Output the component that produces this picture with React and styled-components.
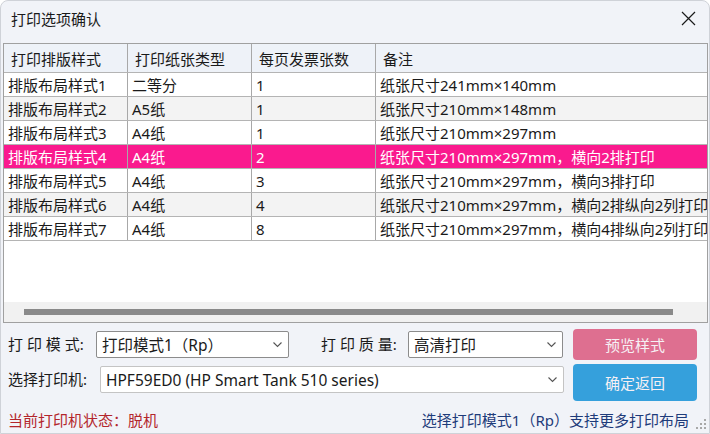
import React from "react";
import styled, { createGlobalStyle } from "styled-components";

const GlobalStyle = createGlobalStyle`
  html, body {
    margin: 0;
    padding: 0;
    background: #ffffff;
  }
  * {
    box-sizing: border-box;
  }
`;

const font = `"Noto Sans", "Noto Sans CJK SC", sans-serif`;

const Window = styled.div`
  width: 710px;
  height: 434px;
  display: flex;
  flex-direction: column;
  background: #f1f3f8;
  border: 1px solid #cfd2d8;
  border-radius: 8px 8px 0 0;
  overflow: hidden;
  font-family: ${font};
  color: #1a1a1a;
`;

const TitleBar = styled.div`
  height: 34px;
  margin-bottom: 8px;
  flex-shrink: 0;
  display: flex;
  align-items: center;
  justify-content: space-between;
  padding: 0 13px 0 10px;
  font-size: 15px;
`;

const CloseButton = styled.button`
  width: 16px;
  height: 16px;
  padding: 0;
  border: none;
  background: transparent;
  display: flex;
  align-items: center;
  justify-content: center;
  cursor: pointer;
`;

const Grid = styled.div`
  height: 280px;
  margin: 0 1px 0 2px;
  display: flex;
  flex-direction: column;
  border: 1px solid #a0a0a0;
  background: #ffffff;
  overflow: hidden;
`;

const Row = styled.div`
  display: grid;
  grid-template-columns: 124px 124px 124px 1fr;
  height: ${(p) => (p.$header ? "29px" : "24px")};
  flex-shrink: 0;
  background: ${(p) =>
    p.$header ? "#eef2f8" : p.$selected ? "#fa1a8e" : p.$alt ? "#f3f3f3" : "#ffffff"};
  color: ${(p) => (p.$selected ? "#ffffff" : "#1a1a1a")};
  border-bottom: 1px solid #b4b4b4;
`;

const Cell = styled.div`
  display: flex;
  align-items: center;
  padding-left: ${(p) => (p.$header ? "7px" : "4px")};
  border-right: 1px solid #a8a8a8;
  font-size: 15px;
  white-space: nowrap;
  overflow: hidden;
  &:last-child {
    border-right: none;
  }
`;

const Filler = styled.div`
  flex: 1;
`;

const ScrollTrack = styled.div`
  height: 20px;
  flex-shrink: 0;
  display: flex;
  align-items: center;
  padding: 0 34px 0 20px;
  background: #f1f1f1;
`;

const ScrollThumb = styled.div`
  flex: 1;
  height: 6px;
  background: #8a8a8a;
`;

const Panel = styled.div`
  flex: 1;
  display: flex;
  flex-direction: column;
  padding: 6px 12px 0 7px;
`;

const FormRow = styled.div`
  display: flex;
  align-items: ${(p) => (p.$top ? "flex-start" : "center")};
  height: ${(p) => p.$h}px;
  margin-bottom: 4px;
`;

const Label = styled.span`
  width: ${(p) => p.$w}px;
  flex-shrink: 0;
  font-size: 15px;
  white-space: pre;
  line-height: 27px;
  margin-top: ${(p) => (p.$top ? 2 : 0)}px;
`;

const Combo = styled.div`
  width: ${(p) => p.$w}px;
  height: 27px;
  flex-shrink: 0;
  margin-top: ${(p) => (p.$top ? 2 : 0)}px;
  display: flex;
  align-items: center;
  justify-content: space-between;
  padding: 0 5px 0 5px;
  background: #ffffff;
  border: 1px solid ${(p) => (p.$dark ? "#8c8c8c" : "#c4c4c4")};
  border-radius: 2px;
  font-size: 15.5px;
  white-space: nowrap;
`;

const Spacer = styled.div`
  width: ${(p) => p.$w}px;
  flex-shrink: 0;
`;

const Button = styled.button`
  width: 124px;
  height: 100%;
  margin-left: auto;
  border: none;
  border-radius: 4px;
  background: ${(p) => p.$bg};
  color: #f6f0f4;
  font-family: ${font};
  font-size: 15px;
  cursor: pointer;
`;

const StatusRow = styled.div`
  display: flex;
  align-items: flex-end;
  margin-top: auto;
  height: 26px;
  padding-bottom: 3px;
  font-size: 15px;
`;

const Offline = styled.span`
  color: #b3262c;
`;

const Hint = styled.span`
  margin-left: auto;
  color: #1e3b7a;
`;

const Grip = styled.svg`
  margin: 0 -10px 0 6px;
  flex-shrink: 0;
`;

const Chevron = () => (
  <svg width="11" height="7" viewBox="0 0 11 7">
    <path d="M1.5 1.5l4 4 4-4" fill="none" stroke="#555" strokeWidth="1.1" />
  </svg>
);

const rows = [
  ["排版布局样式1", "二等分", "1", "纸张尺寸241mm×140mm"],
  ["排版布局样式2", "A5纸", "1", "纸张尺寸210mm×148mm"],
  ["排版布局样式3", "A4纸", "1", "纸张尺寸210mm×297mm"],
  ["排版布局样式4", "A4纸", "2", "纸张尺寸210mm×297mm，横向2排打印"],
  ["排版布局样式5", "A4纸", "3", "纸张尺寸210mm×297mm，横向3排打印"],
  ["排版布局样式6", "A4纸", "4", "纸张尺寸210mm×297mm，横向2排纵向2列打印"],
  ["排版布局样式7", "A4纸", "8", "纸张尺寸210mm×297mm，横向4排纵向2列打印"],
];

const headers = ["打印排版样式", "打印纸张类型", "每页发票张数", "备注"];

export default function App() {
  const selected = 3;

  return (
    <>
      <GlobalStyle />
      <Window>
        <TitleBar>
          <span>打印选项确认</span>
          <CloseButton>
            <svg width="15" height="15" viewBox="0 0 15 15">
              <path d="M1 1l13 13M14 1L1 14" stroke="#1a1a1a" strokeWidth="1.2" />
            </svg>
          </CloseButton>
        </TitleBar>

        <Grid>
          <Row $header>
            {headers.map((h) => (
              <Cell key={h} $header>
                {h}
              </Cell>
            ))}
          </Row>
          {rows.map((r, i) => (
            <Row key={r[0]} $alt={i % 2 === 1} $selected={i === selected}>
              {r.map((c, j) => (
                <Cell key={j}>{c}</Cell>
              ))}
            </Row>
          ))}
          <Filler />
          <ScrollTrack>
            <ScrollThumb />
          </ScrollTrack>
        </Grid>

        <Panel>
          <FormRow $h={31}>
            <Label $w={88}>打 印 模 式:</Label>
            <Combo $w={193} $dark>
              <span>打印模式1（Rp）</span>
              <Chevron />
            </Combo>
            <Spacer $w={32} />
            <Label $w={87}>打 印 质 量:</Label>
            <Combo $w={155} $dark>
              <span>高清打印</span>
              <Chevron />
            </Combo>
            <Button $bg="#de6f90">预览样式</Button>
          </FormRow>
          <FormRow $h={37} $top>
            <Label $w={92} $top>选择打印机:</Label>
            <Combo $w={464} $top>
              <span>HPF59ED0 (HP Smart Tank 510 series)</span>
              <Chevron />
            </Combo>
            <Button $bg="#35a0dc">确定返回</Button>
          </FormRow>
          <StatusRow>
            <Offline>当前打印机状态：脱机</Offline>
            <Hint>选择打印模式1（Rp）支持更多打印布局</Hint>
            <Grip width="12" height="12" viewBox="0 0 12 12">
              {[
                [10, 2],
                [10, 6],
                [6, 6],
                [10, 10],
                [6, 10],
                [2, 10],
              ].map(([x, y]) => (
                <rect key={`${x}-${y}`} x={x - 1} y={y - 1} width="2" height="2" fill="#a8a8a8" />
              ))}
            </Grip>
          </StatusRow>
        </Panel>
      </Window>
    </>
  );
}
